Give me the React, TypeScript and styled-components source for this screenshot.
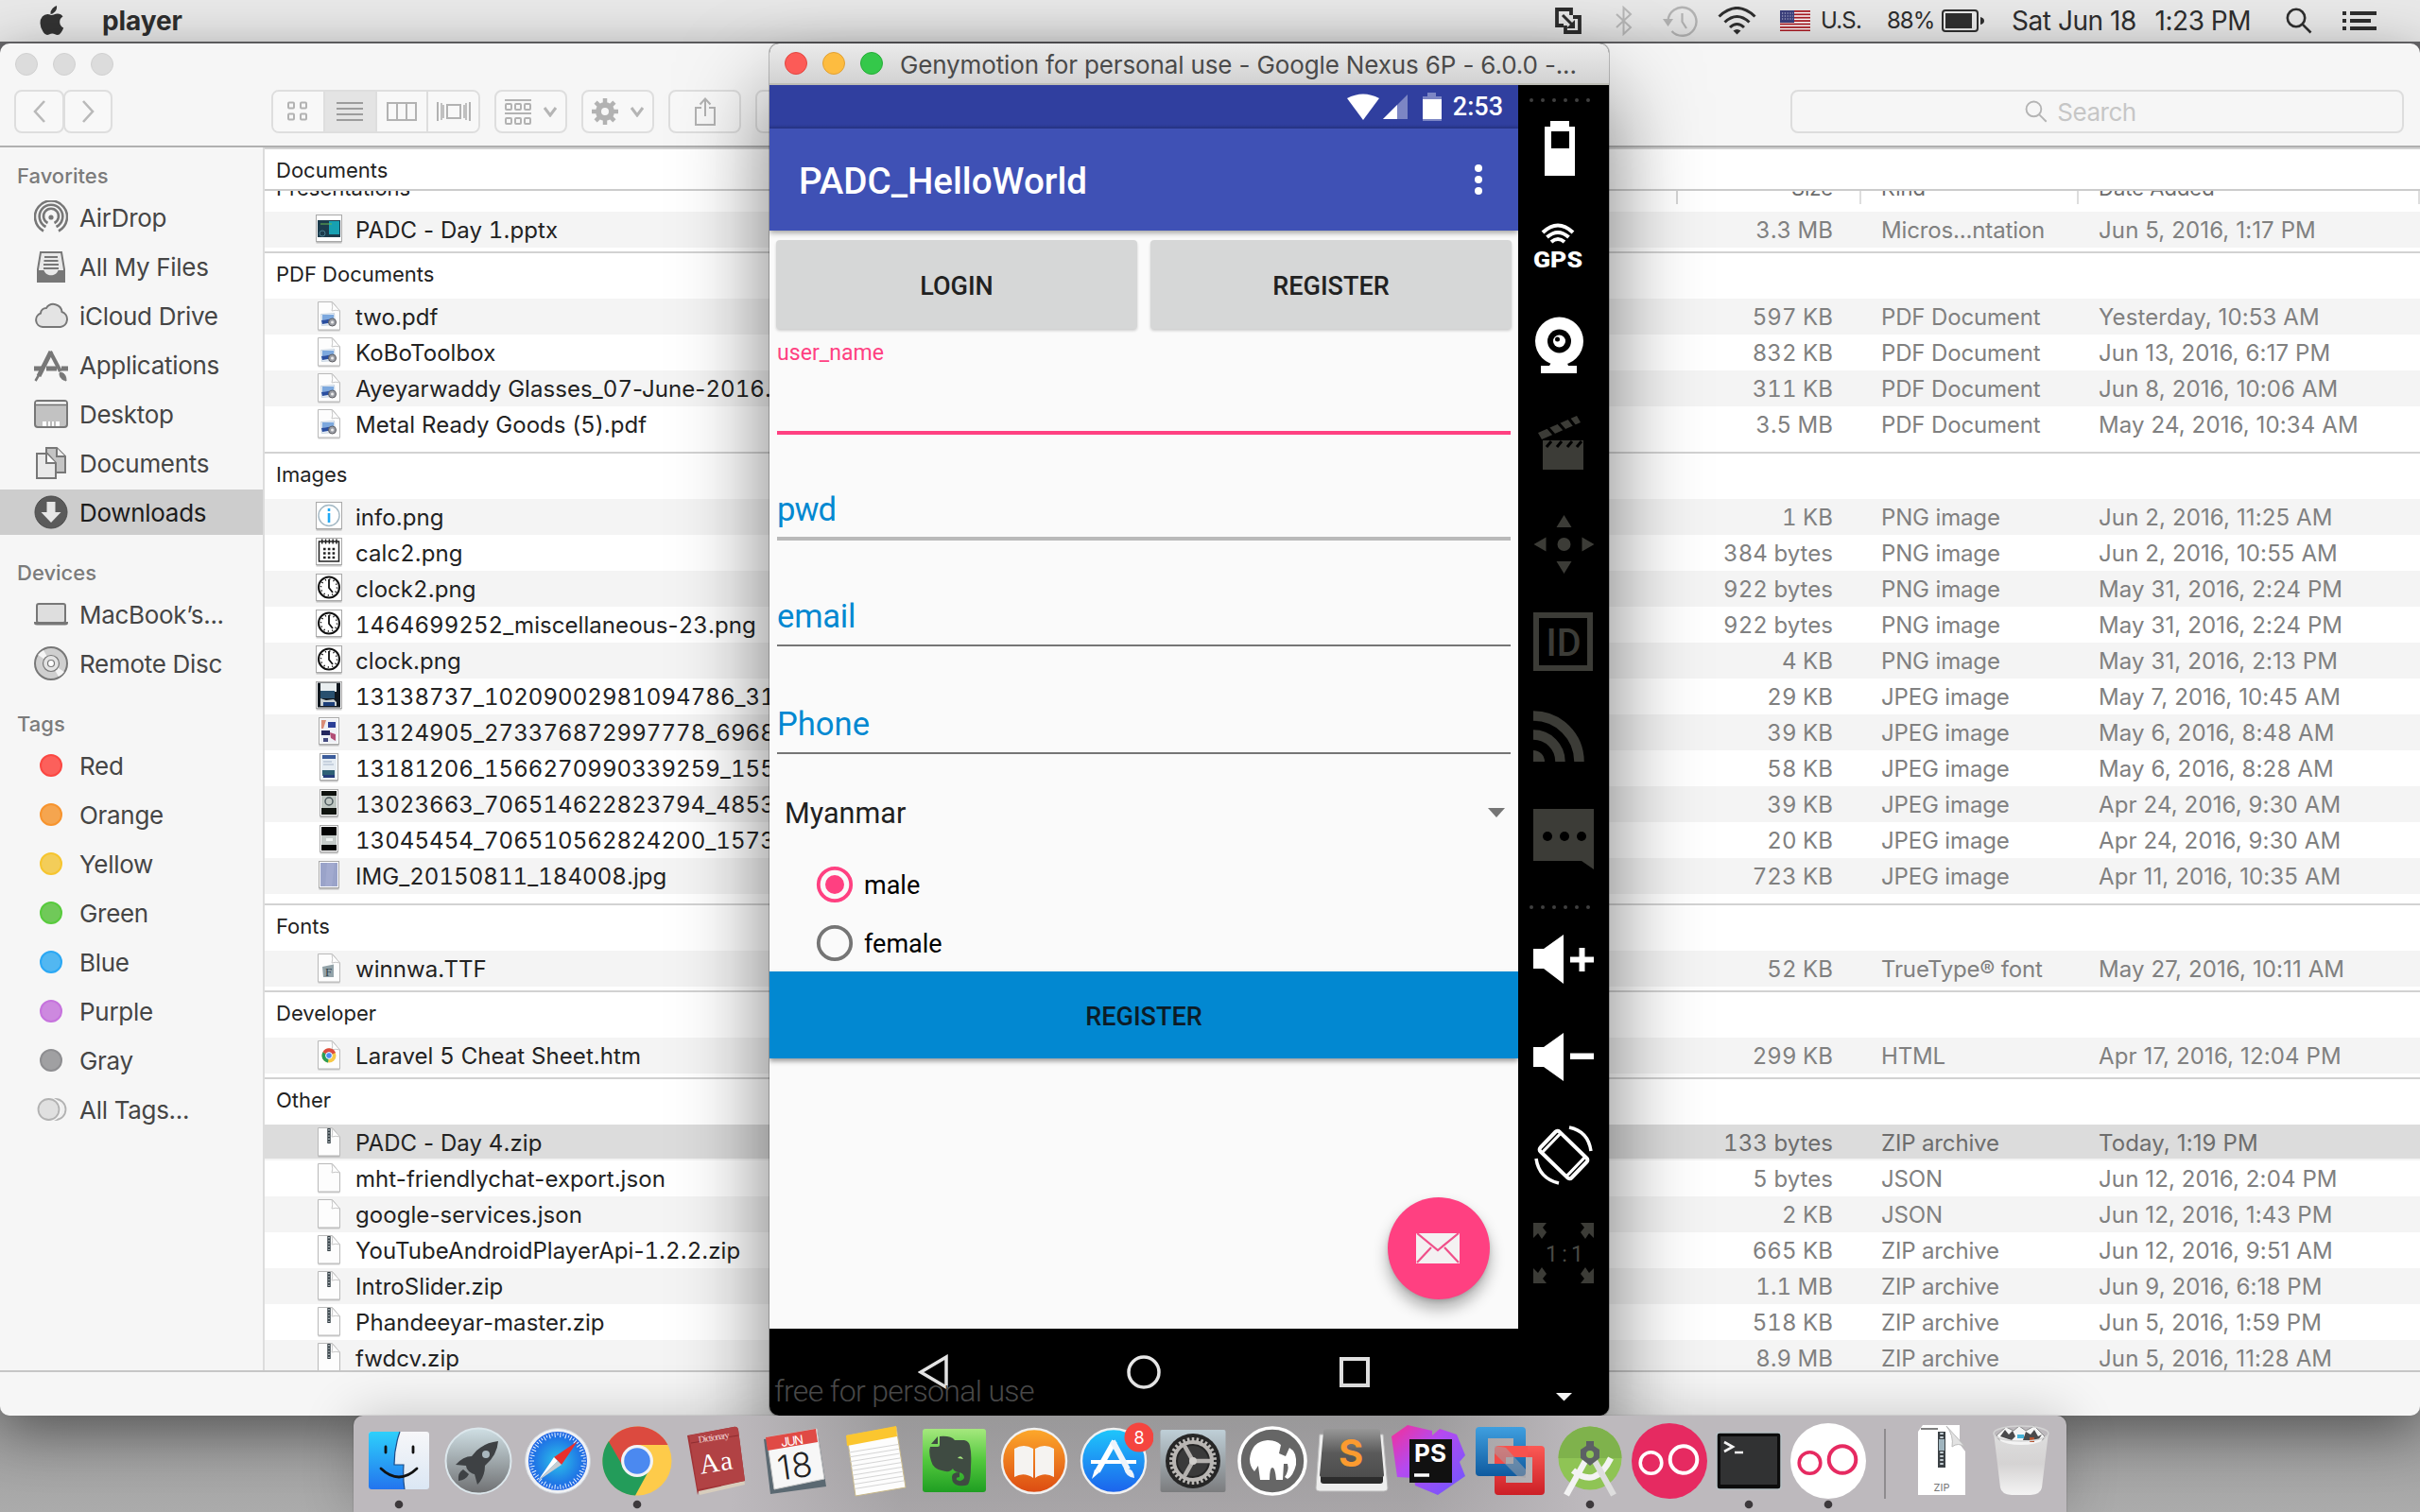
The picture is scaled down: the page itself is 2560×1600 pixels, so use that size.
import React from "react";
import styled, { createGlobalStyle, css } from "styled-components";

const ui = `Inter, "Liberation Sans", sans-serif`;
const droid = `Roboto, "Liberation Sans", sans-serif`;

const GlobalStyle = createGlobalStyle`
  *, *::before, *::after { box-sizing: border-box; }
  html, body { margin: 0; padding: 0; }
  body { width: 2560px; height: 1600px; overflow: hidden; font-family: ${ui}; }
  svg { display: block; flex: none; }
`;

/* ---------- Desktop ---------- */

const Desktop = styled.div`
  position: relative;
  display: flex;
  flex-direction: column;
  width: 2560px;
  height: 1600px;
  overflow: hidden;
  background: linear-gradient(#69686b 0, #69686b 60px, #959595 1450px, #ababab 1600px);
`;

/* ---------- Menu bar ---------- */

const MenuBar = styled.header`
  display: flex;
  align-items: center;
  justify-content: space-between;
  height: 44px;
  margin-bottom: 2px;
  padding: 0 46px 0 39px;
  background: #e8e8e8;
  color: #2e2e2e;
`;

const MenuLeft = styled.div`
  display: flex;
  align-items: center;
  gap: 39px;
`;

const AppName = styled.span`
  font-size: 28px;
  font-weight: 700;
  line-height: 42px;
  letter-spacing: -0.1px;
`;

const MenuRight = styled.div`
  display: flex;
  align-items: center;
`;

const Extra = styled.div<{ $w: number; $after?: number }>`
  display: flex;
  justify-content: space-between;
  width: ${(p) => p.$w}px;
  margin-right: ${(p) => p.$after ?? 0}px;
  white-space: nowrap;
`;

const MenuText = styled.span<{ $size?: number; $track?: number }>`
  font-size: ${(p) => p.$size ?? 27}px;
  letter-spacing: ${(p) => p.$track ?? -0.3}px;
  line-height: 44px;
`;

/* ---------- Finder window ---------- */

const FinderWindow = styled.section`
  display: flex;
  flex-direction: column;
  height: 1452px;
  border-radius: 10px;
  overflow: hidden;
  background: #f6f6f6;
`;

const FinderShadow = styled.div`
  flex: none;
  border-radius: 10px;
  box-shadow: 0 16px 60px rgba(0, 0, 0, 0.45);
`;

const Titlebar = styled.div`
  display: flex;
  align-items: center;
  gap: 16px;
  height: 44px;
  padding-left: 16px;
`;

const Light = styled.i<{ $fill: string; $ring: string }>`
  width: 24px;
  height: 24px;
  border-radius: 50%;
  background: ${(p) => p.$fill};
  border: 1px solid ${(p) => p.$ring};
`;

const Toolbar = styled.div`
  display: flex;
  align-items: flex-start;
  height: 66px;
  padding: 5px 17px 0 15px;
  border-bottom: 2px solid #b0b0b0;
`;

const ToolButton = styled.div<{ $w: number; $after?: number }>`
  display: flex;
  align-items: center;
  justify-content: center;
  gap: 12px;
  flex: none;
  width: ${(p) => p.$w}px;
  height: 46px;
  margin-right: ${(p) => p.$after ?? 0}px;
  border: 2px solid #dedede;
  border-radius: 8px;
  background: #f8f8f8;
`;

const Segments = styled.div`
  display: flex;
  flex: none;
  width: 221px;
  height: 46px;
  margin-right: 15px;
  border: 2px solid #dedede;
  border-radius: 8px;
  overflow: hidden;
`;

const Segment = styled.div<{ $on?: boolean }>`
  display: flex;
  align-items: center;
  justify-content: center;
  flex: 1;
  background: ${(p) => (p.$on ? "#e4e4e4" : "#f8f8f8")};
  & + & { border-left: 2px solid #dedede; }
`;

const SearchBox = styled.div`
  display: flex;
  align-items: center;
  justify-content: center;
  gap: 10px;
  width: 649px;
  height: 46px;
  margin-left: auto;
  padding-right: 35px;
  border: 2px solid #dddddd;
  border-radius: 8px;
  color: #c6c6c6;
  font-size: 26px;
  letter-spacing: -0.5px;
`;

const FinderBody = styled.div`
  display: flex;
  height: 1294px;
`;

const Sidebar = styled.nav`
  width: 280px;
  border-right: 2px solid #dcdcdc;
  background: #f6f6f6;
`;

const SideHeading = styled.h3<{ $first?: boolean }>`
  display: flex;
  align-items: flex-end;
  height: ${(p) => (p.$first ? 50 : 56)}px;
  margin: 0;
  padding: 0 0 0 18px;
  font-size: 22px;
  font-weight: 500;
  line-height: 40px;
  letter-spacing: 0;
  color: #7b7b7b;
`;

const SideItem = styled.div<{ $on?: boolean }>`
  display: flex;
  align-items: center;
  gap: 12px;
  height: 48px;
  margin-bottom: 4px;
  padding-left: 36px;
  font-size: 26px;
  letter-spacing: -0.3px;
  color: ${(p) => (p.$on ? "#1c1c1c" : "#454545")};
  background: ${(p) => (p.$on ? "#cdcdcd" : "transparent")};
`;

const SideLabel = styled.span`
  padding-top: 2px;
  line-height: 40px;
`;

const FileList = styled.div`
  flex: 1;
  height: 1294px;
  overflow: hidden;
  border-top: 2px solid #d2d2d2;
  background: #fff;
`;

const StickyTitle = styled.h4`
  height: 44px;
  margin: 0;
  padding-left: 12px;
  border-bottom: 2px solid #cccccc;
  font-size: 22px;
  font-weight: 400;
  line-height: 44px;
  color: #222;
`;

const grid = css`
  display: grid;
  grid-template-columns: 1493px 194px 230px 1fr;
`;

const ColumnHeads = styled.div`
  display: grid;
  grid-template-columns: 1495px 194px 230px 1fr;
  height: 22px;
  overflow: hidden;
`;

const Head = styled.div<{ $title?: boolean }>`
  height: 14px;
  padding: 0 21px;
  overflow: hidden;
  border-right: 2px solid #dddddd;
  ${(p) => p.$title && "padding-left: 12px; border-right-color: #d4d4d4;"}
  &:nth-child(2) { text-align: right; padding-right: 28px; }
  span {
    display: block;
    height: 14px;
    margin-top: -23px;
    font-size: 22px;
    line-height: 40px;
    color: ${(p) => (p.$title ? "#222" : "#6c6c6c")};
  }
`;

const Group = styled.section<{ $gap: number }>`
  padding-bottom: ${(p) => p.$gap}px;
`;

const GroupTitle = styled.h4`
  height: 50px;
  margin: 0;
  padding-left: 12px;
  border-top: 2px solid #d2d2d2;
  font-size: 22px;
  font-weight: 400;
  line-height: 44px;
  color: #222;
`;

const Row = styled.div<{ $on?: boolean; $stripe: boolean }>`
  ${grid}
  height: 38px;
  font-size: 24px;
  line-height: 40px;
  white-space: nowrap;
  color: ${(p) => (p.$on ? "#6d6d6d" : "#808080")};
  background: ${(p) =>
    p.$on ? "linear-gradient(#dcdcdc 36px, #f4f4f4 36px)" : p.$stripe ? "#f4f4f4" : "#fff"};
`;

const NameCell = styled.div`
  display: flex;
  align-items: center;
  gap: 14px;
  height: 38px;
  padding-left: 54px;
`;

const FileName = styled.span`
  padding-top: 2px;
  line-height: 36px;
  letter-spacing: 0.06px;
  color: #222;
`;

const Digits = styled.span`
  font-variant-numeric: tabular-nums;
`;

const Cell = styled.div<{ $right?: boolean; $track?: number }>`
  height: 38px;
  padding: 0 ${(p) => (p.$right ? 28 : 0)}px 0 23px;
  text-align: ${(p) => (p.$right ? "right" : "left")};
  font-variant-numeric: ${(p) => (p.$right ? "tabular-nums" : "normal")};
  letter-spacing: ${(p) => p.$track ?? -0.15}px;
`;

const StatusFooter = styled.div`
  height: 48px;
  border-top: 2px solid #c6c6c6;
`;

/* ---------- Emulator window ---------- */

const Emulator = styled.section`
  position: absolute;
  left: 814px;
  top: 46px;
  display: flex;
  flex-direction: column;
  width: 888px;
  height: 1452px;
  border-radius: 10px;
  background: #000;
  overflow: hidden;
`;

const EmulatorShadow = styled.div`
  position: absolute;
  left: 814px;
  top: 46px;
  width: 888px;
  height: 1452px;
  border-radius: 10px;
  box-shadow: 0 0 0 1px rgba(0, 0, 0, 0.22), 0 50px 95px rgba(0, 0, 0, 0.52);
`;

const EmuTitle = styled.div`
  display: flex;
  align-items: center;
  gap: 16px;
  height: 44px;
  padding-left: 16px;
  border-bottom: 2px solid #bdbdb6;
  background: linear-gradient(#ebebeb, #d2d2d2);
  font-size: 26px;
  color: #4a4a4a;
  span {
    margin-left: 2px;
    padding-top: 2px;
    letter-spacing: -0.14px;
    white-space: nowrap;
  }
`;

const EmuBody = styled.div`
  display: flex;
  height: 1408px;
`;

const Screen = styled.div`
  display: flex;
  flex-direction: column;
  width: 792px;
  background: #fafafa;
  font-family: ${droid};
`;

const StatusBar = styled.div`
  display: flex;
  align-items: center;
  justify-content: flex-end;
  height: 46px;
  padding-right: 16px;
  background: linear-gradient(#303f9f 42px, #29378c 46px);
  color: #fff;
  font-size: 27px;
  font-weight: 500;
  line-height: 50px;
`;

const AppBar = styled.div`
  display: flex;
  align-items: center;
  justify-content: space-between;
  flex: none;
  height: 108px;
  padding: 0 38px 0 31px;
  background: #3f51b5;
  box-shadow: 0 2px 6px rgba(0, 0, 0, 0.4);
  color: #fff;
  font-size: 38.6px;
  font-weight: 500;
`;

const AppTitle = styled.span`
  padding-top: 3px;
`;

const ButtonRow = styled.div`
  display: flex;
  gap: 14px;
  height: 106px;
  padding: 10px 7px 0;
`;

const RaisedButton = styled.div`
  display: flex;
  align-items: center;
  justify-content: center;
  flex: 1;
  height: 94px;
  padding-top: 4px;
  border-radius: 4px;
  background: #d6d7d7;
  box-shadow: 0 2px 3px rgba(0, 0, 0, 0.18);
  font-size: 27px;
  font-weight: 500;
  color: #212121;
`;

const Field = styled.div<{ $h: number; $line: string; $weight: number; $pad: number; $track?: number }>`
  display: flex;
  align-items: flex-end;
  flex: none;
  height: ${(p) => p.$h}px;
  margin: 0 8px;
  padding-bottom: ${(p) => p.$pad}px;
  border-bottom: ${(p) => p.$weight}px solid ${(p) => p.$line};
  font-size: 34.6px;
  line-height: 40px;
  letter-spacing: ${(p) => p.$track ?? 0}px;
  color: #0288d1;
`;

const FocusedField = styled(Field)`
  align-items: flex-start;
  padding-top: 4px;
  font-size: 23.1px;
  color: #ff4081;
`;

const Spinner = styled.div`
  display: flex;
  align-items: center;
  justify-content: space-between;
  flex: none;
  height: 107px;
  padding: 16px 14px 0 16px;
  font-size: 30.6px;
  line-height: 36px;
  color: #212121;
  span { padding-top: 2px; }
`;

const RadioRow = styled.div`
  display: flex;
  align-items: center;
  gap: 11px;
  flex: none;
  height: 62px;
  padding-left: 49px;
  font-size: 27px;
  color: #000;
  span { padding-top: 2px; }
`;

const BlueButton = styled.div`
  display: flex;
  align-items: center;
  justify-content: center;
  flex: none;
  height: 92px;
  margin-top: -1px;
  padding-top: 3px;
  background: #0288d1;
  box-shadow: 0 3px 5px rgba(0, 0, 0, 0.38);
  font-size: 27px;
  font-weight: 500;
  color: #0c1c27;
`;

const FabArea = styled.div`
  display: flex;
  align-items: flex-end;
  justify-content: flex-end;
  flex: 1;
  padding: 0 30px 31px 0;
`;

const Fab = styled.div`
  display: flex;
  align-items: center;
  justify-content: center;
  width: 108px;
  height: 108px;
  padding-right: 2px;
  border-radius: 50%;
  background: #ff4081;
  box-shadow: 0 10px 16px rgba(0, 0, 0, 0.3), 0 2px 4px rgba(0, 0, 0, 0.12);
`;

const NavBar = styled.div`
  position: relative;
  display: flex;
  align-items: center;
  justify-content: center;
  gap: 189px;
  flex: none;
  height: 92px;
  padding-right: 1px;
  background: #000;
`;

const Watermark = styled.span`
  position: absolute;
  left: 5px;
  top: 45px;
  font-size: 32px;
  font-weight: 300;
  line-height: 42px;
  letter-spacing: -0.65px;
  color: #4c4c4c;
`;

const Strip = styled.aside`
  display: flex;
  flex-direction: column;
  align-items: center;
  width: 96px;
  padding-top: 14px;
  background: #000;
`;

const Grip = styled.div<{ $top?: number }>`
  display: flex;
  gap: 8px;
  flex: none;
  width: 64px;
  height: 4px;
  margin: ${(p) => p.$top ?? 0}px 8px 0 0;
  i {
    width: 4px;
    height: 4px;
    border-radius: 50%;
    background: #3f3f3f;
  }
`;

/* ---------- Dock ---------- */

const DockArea = styled.footer`
  position: relative;
  display: flex;
  justify-content: center;
  width: 2560px;
  height: 102px;
`;

const DockShelf = styled.div`
  display: flex;
  width: 1812px;
  height: 102px;
  padding: 0 6px;
  border-radius: 10px 10px 0 0;
  background:
    linear-gradient(90deg, rgba(189, 185, 189, 1) 22%, rgba(150, 149, 151, 0.35) 32%, rgba(150, 149, 151, 0.35) 62%, rgba(189, 185, 189, 1) 72%),
    linear-gradient(#9b9a9b, #b2aeb1);
  box-shadow: 0 0 56px rgba(0, 0, 0, 0.2), 0 0 2px rgba(0, 0, 0, 0.25);
`;

const DockRule = styled.div`
  display: flex;
  justify-content: center;
  width: 36px;
  padding-top: 14px;
  &::before {
    content: "";
    width: 2px;
    height: 74px;
    background: #8f8c8f;
  }
`;

/* ---------- Small icon helpers ---------- */

type Kids = { children?: React.ReactNode };
const Svg = ({ w, h, box, children }: { w: number; h: number; box?: string } & Kids) => (
  <svg width={w} height={h} viewBox={box ?? `0 0 ${w} ${h}`} fill="none">
    {children}
  </svg>
);

const Chevron = () => (
  <Svg w={16} h={12}>
    <path d="M2 2l6 8 6-8" stroke="#b5b5b5" strokeWidth="3" />
  </Svg>
);

const Magnifier = ({ s, c, t }: { s: number; c: string; t: number }) => (
  <svg width={s} height={s} viewBox="0 0 28 28" fill="none" stroke={c} strokeWidth={t}>
    <circle cx="11" cy="11" r="9.2" />
    <path d="M17.6 17.6L26.5 26.5" />
  </svg>
);

const gearTeeth = (n: number, r0: number, r1: number, w: number, fill: string) =>
  Array.from({ length: n }, (_, i) => (
    <rect key={i} x={-w / 2} y={-r1} width={w} height={r1 - r0} fill={fill} transform={`rotate(${(360 / n) * i})`} />
  ));

/* ---------- Sidebar icons ---------- */

const g = "#777";
const sideIcons: Record<string, React.ReactNode> = {
  airdrop: (
    <g stroke={g} strokeWidth="2.6">
      <path d="M10 32.5A17 17 0 1 1 26 32.5" />
      <path d="M12.5 28A12.3 12.3 0 1 1 23.5 28" />
      <path d="M14.5 24A8 8 0 1 1 21.5 24" />
      <circle cx="18" cy="18" r="2.6" fill={g} stroke="none" />
    </g>
  ),
  allfiles: (
    <g>
      <path d="M7 3h22l3 18v13H4V21z" fill="#e9e9e9" stroke={g} strokeWidth="2" />
      <path d="M3.500 22h7c2 7 13 7 15 0h7v12h-29z" fill={g} />
      <path d="M11 8h14M10.500 12h15M10 16h16M10 20h16" stroke={g} strokeWidth="2" />
    </g>
  ),
  cloud: (
    <path
      d="M9 30a7.500 7.500 0 0 1-2-14.500 6 6 0 0 1 6-5.500A9 9 0 0 1 29.500 14 8.300 8.300 0 0 1 28 30z"
      fill="#e4e4e4"
      stroke={g}
      strokeWidth="2"
    />
  ),
  apps: (
    <g stroke={g}>
      <path d="M0 22h8M13 22h11M29 22h7" strokeWidth="5" />
      <path d="M18 4L5 30" strokeWidth="5" />
      <path d="M5 29l-3.500 6" strokeWidth="2.500" />
      <path d="M17 4l11 21" strokeWidth="4" />
      <path d="M28 26c5 1 6 5 6 9-4-1-7-3-7-8z" fill={g} />
    </g>
  ),
  desktop: (
    <g>
      <rect x="1" y="4" width="34" height="28" rx="3" fill="#c2c2c2" stroke={g} strokeWidth="2" />
      <path d="M2 6.500h32" stroke="#fff" strokeWidth="2" />
      <path d="M2 8.500h32" stroke={g} strokeWidth="1.500" />
      <path d="M9 26h18v5H9z" fill="#fff" />
      <path d="M14 26v5M18 26v5M22 26v5" stroke={g} />
    </g>
  ),
  docs: (
    <g stroke={g} strokeWidth="2">
      <path d="M13 2h11l9 9v17H13z" fill="#c4c4c4" />
      <path d="M24 2v9h9" fill="#eee" />
      <path d="M3 8h11l9 10v16H3z" fill="#e9e9e9" />
      <path d="M13 8v10h10" fill="#fff" />
    </g>
  ),
  down: (
    <g>
      <circle cx="18" cy="18" r="17" fill="#5a5a5a" stroke="#4b4b4b" />
      <path d="M13.500 7h9v11h6L18 29 7.500 18h6z" fill="#e6e6e6" />
    </g>
  ),
  laptop: (
    <g>
      <rect x="3" y="7" width="30" height="20" rx="2" fill="#dedede" stroke={g} strokeWidth="2" />
      <path d="M0 26h36v1q0 2.500-3 2.500H3q-3 0-3-2.500z" fill={g} />
    </g>
  ),
  disc: (
    <g stroke={g}>
      <circle cx="18" cy="18" r="17" fill="#cfcfcf" strokeWidth="2" />
      <path d="M18 18L4 9a17 17 0 0 1 6-5zM18 18l14 9a17 17 0 0 1-6 5z" fill="#f5f5f5" stroke="none" />
      <circle cx="18" cy="18" r="8.500" fill="#e3e3e3" strokeWidth="1.200" />
      <circle cx="18" cy="18" r="3.500" fill="#fff" strokeWidth="1.200" />
    </g>
  ),
  alltags: (
    <g stroke="#b2b2b2" strokeWidth="1.800">
      <circle cx="22.500" cy="18" r="11" fill="#efefef" />
      <circle cx="16" cy="18" r="13" fill="#f6f6f6" stroke="none" />
      <circle cx="15.500" cy="18" r="11" fill="#e0e0e0" />
    </g>
  ),
};

const Tag = ({ c, r }: { c: string; r: string }) => (
  <Svg w={36} h={36}>
    <circle cx="18" cy="18" r="11" fill={c} stroke={r} strokeWidth="2" />
  </Svg>
);

const SideIcon = ({ name }: { name: string }) => (
  <Svg w={36} h={36}>{sideIcons[name]}</Svg>
);

const favorites = [
  ["airdrop", "AirDrop"],
  ["allfiles", "All My Files"],
  ["cloud", "iCloud Drive"],
  ["apps", "Applications"],
  ["desktop", "Desktop"],
  ["docs", "Documents"],
  ["down", "Downloads"],
];

const tags = [
  ["Red", "#fc605b", "#fb4843"],
  ["Orange", "#f5a54f", "#f7942e"],
  ["Yellow", "#f3cd59", "#f6c52f"],
  ["Green", "#70c959", "#58cb3d"],
  ["Blue", "#52b7f1", "#2ba8f4"],
  ["Purple", "#cd89df", "#c673dd"],
  ["Gray", "#a0a0a2", "#8e8e91"],
];

/* ---------- File icons ---------- */

const Page = ({ children }: Kids) => (
  <g>
    <path d="M2.500 2h15l8 9.500v20h-23z" fill="#000" opacity=".18" transform="translate(0 1)" />
    <path d="M2.500 1.500h15l8 9.500v20h-23z" fill="#fdfdfd" stroke="#b9b9b9" />
    <path d="M17 1.500q1.500 6 0 9.500 4-1.500 8.500 0z" fill="#fff" stroke="#c8c8c8" />
    {children}
  </g>
);

const Thumb = ({ x = 0, children }: { x?: number } & Kids) => (
  <g>
    <rect x={x + 0.5} y="2.500" width={27 - x * 2} height="29" fill="#000" opacity=".22" />
    <rect x={x + 0.5} y="1.500" width={27 - x * 2} height="28" fill="#fff" stroke="#a9a9a9" />
    {children}
  </g>
);

const Clock = () => (
  <Thumb>
    <circle cx="14" cy="15.500" r="11" stroke="#111" strokeWidth="2" />
    <path d="M14 7v9l4 5" stroke="#111" strokeWidth="1.800" />
    <circle cx="14" cy="15.500" r="8.500" stroke="#111" strokeWidth="1.600" strokeDasharray="1.200 3.250" />
  </Thumb>
);

const fileIcons: Record<string, React.ReactNode> = {
  pptx: (
    <Thumb>
      <rect x="2" y="7" width="24" height="18" fill="#1c3b4c" />
      <rect x="14" y="8" width="11" height="14" fill="#17a0b2" />
      <path d="M5 11h12" stroke="#69b84f" />
      <circle cx="7" cy="21" r="3" stroke="#4a7d90" />
    </Thumb>
  ),
  pdf: (
    <Page>
      <rect x="6" y="14" width="14" height="12" fill="#e9f0f8" stroke="#a9bcd0" strokeWidth=".6" transform="rotate(-4 13 20)" />
      <path d="M7 15h12v4l-12 2z" fill="#7ca8de" />
      <path d="M6 21l13-2v4l-12 2z" fill="#2a4fa0" />
      <circle cx="17.500" cy="23" r="4" fill="#9c9fa6" stroke="#5d5d62" />
      <circle cx="17.500" cy="23" r="1.500" fill="#ececec" />
    </Page>
  ),
  info: (
    <Thumb>
      <circle cx="14" cy="15.500" r="11" stroke="#a3b8c4" strokeWidth="1.400" />
      <path d="M14 13v10M14 8v3" stroke="#21a9f5" strokeWidth="2.600" />
    </Thumb>
  ),
  calc: (
    <Thumb>
      <rect x="3.500" y="5" width="21" height="21" stroke="#222" strokeWidth="1.500" />
      <path d="M6 5h17" stroke="#222" strokeWidth="5" strokeDasharray="1.500 2.300" />
      <path d="M8 13h13M8 17.500h13M8 22h13" stroke="#222" strokeWidth="2.600" strokeDasharray="2.600 2.200" />
    </Thumb>
  ),
  clock: <Clock />,
  j1: (
    <Thumb>
      <rect x="2" y="2.500" width="24" height="26" fill="#111820" />
      <rect x="5" y="3" width="17" height="9" fill="#e9eef0" />
      <rect x="5" y="11" width="15" height="8" fill="#29506f" />
      <path d="M5 19l6 2 8-1 3 3v4H5z" fill="#c9d1d3" />
      <rect x="8" y="23" width="12" height="4" fill="#1c3f7a" />
    </Thumb>
  ),
  j2: (
    <Thumb x={3}>
      <rect x="5" y="3" width="18" height="25" fill="#eef0f5" />
      <path d="M6 4h5l-3 9H6z" fill="#d98d77" />
      <path d="M13 6h8v6h-8z" fill="#2b3f97" />
      <path d="M6 15h9v5H6z" fill="#23275e" />
      <path d="M15 17l6 2v7l-5-3z" fill="#b24d75" />
      <path d="M8 23h5v4H8z" fill="#454b80" />
    </Thumb>
  ),
  j3: (
    <Thumb x={4}>
      <rect x="6" y="3" width="16" height="25" fill="#e6edf3" />
      <rect x="7" y="3" width="14" height="4" fill="#3c5c9b" />
      <path d="M8 10h9M8 13h11" stroke="#a6b4c8" />
      <rect x="7" y="19" width="13" height="6" fill="#2f6176" />
      <rect x="8" y="24" width="12" height="3" fill="#253d7b" />
    </Thumb>
  ),
  j4: (
    <Thumb x={4}>
      <rect x="6" y="3" width="16" height="25" fill="#10140f" />
      <rect x="6" y="8" width="16" height="13" fill="#bfc7c2" />
      <circle cx="14" cy="14" r="4" stroke="#4e5b5e" strokeWidth="1.500" />
    </Thumb>
  ),
  j5: (
    <Thumb x={4}>
      <rect x="6" y="3" width="16" height="25" fill="#040404" />
      <rect x="6" y="12" width="16" height="10" fill="#c5cbc9" />
      <path d="M11 15h7v3h-7z" fill="#eef2f1" />
    </Thumb>
  ),
  j6: (
    <Thumb x={3}>
      <rect x="5" y="3" width="18" height="25" fill="#9aa3c9" />
      <path d="M12 3h8l-3 25h-7z" fill="#a2aacf" />
    </Thumb>
  ),
  ttf: (
    <Page>
      <path d="M7 15l12-2.500V26H8z" fill="#93a3a9" />
      <text x="10" y="25" fontFamily="Liberation Serif, serif" fontSize="13" fill="#35444a">F</text>
    </Page>
  ),
  htm: (
    <Page>
      <circle cx="14" cy="17" r="7.500" fill="#f7c948" />
      <path d="M14 17L7.500 13.200A7.500 7.500 0 0 0 13 24.400z" fill="#2a9d57" />
      <path d="M14 17L7.500 13.200A7.500 7.500 0 0 1 21 14z" fill="#dc4c40" />
      <circle cx="14" cy="17" r="3.400" fill="#4c8bf5" stroke="#fff" strokeWidth="1" />
    </Page>
  ),
  zip: (
    <Page>
      <path d="M14 2v16" stroke="#2f3a40" strokeWidth="3.400" />
      <path d="M14 3v14" stroke="#cfd6da" strokeWidth="1.400" strokeDasharray="1.400 1.800" />
    </Page>
  ),
  json: <Page />,
};

type FileRow = [icon: string, name: string, size: string, kind: string, date: string, on?: boolean];

const firstFile: FileRow = ["pptx", "PADC - Day 1.pptx", "3.3 MB", "Micros...ntation", "Jun 5, 2016, 1:17 PM"];

const groups: { title: string; gap: number; files: FileRow[] }[] = [
  {
    title: "PDF Documents",
    gap: 10,
    files: [
      ["pdf", "two.pdf", "597 KB", "PDF Document", "Yesterday, 10:53 AM"],
      ["pdf", "KoBoToolbox", "832 KB", "PDF Document", "Jun 13, 2016, 6:17 PM"],
      ["pdf", "Ayeyarwaddy Glasses_07-June-2016.pdf", "311 KB", "PDF Document", "Jun 8, 2016, 10:06 AM"],
      ["pdf", "Metal Ready Goods (5).pdf", "3.5 MB", "PDF Document", "May 24, 2016, 10:34 AM"],
    ],
  },
  {
    title: "Images",
    gap: 10,
    files: [
      ["info", "info.png", "1 KB", "PNG image", "Jun 2, 2016, 11:25 AM"],
      ["calc", "calc2.png", "384 bytes", "PNG image", "Jun 2, 2016, 10:55 AM"],
      ["clock", "clock2.png", "922 bytes", "PNG image", "May 31, 2016, 2:24 PM"],
      ["clock", "1464699252_miscellaneous-23.png", "922 bytes", "PNG image", "May 31, 2016, 2:24 PM"],
      ["clock", "clock.png", "4 KB", "PNG image", "May 31, 2016, 2:13 PM"],
      ["j1", "13138737_10209002981094786_31", "29 KB", "JPEG image", "May 7, 2016, 10:45 AM"],
      ["j2", "13124905_273376872997778_6968", "39 KB", "JPEG image", "May 6, 2016, 8:48 AM"],
      ["j3", "13181206_1566270990339259_155", "58 KB", "JPEG image", "May 6, 2016, 8:28 AM"],
      ["j4", "13023663_706514622823794_4853", "39 KB", "JPEG image", "Apr 24, 2016, 9:30 AM"],
      ["j5", "13045454_706510562824200_1573", "20 KB", "JPEG image", "Apr 24, 2016, 9:30 AM"],
      ["j6", "IMG_20150811_184008.jpg", "723 KB", "JPEG image", "Apr 11, 2016, 10:35 AM"],
    ],
  },
  {
    title: "Fonts",
    gap: 4,
    files: [["ttf", "winnwa.TTF", "52 KB", "TrueType® font", "May 27, 2016, 10:11 AM"]],
  },
  {
    title: "Developer",
    gap: 4,
    files: [["htm", "Laravel 5 Cheat Sheet.htm", "299 KB", "HTML", "Apr 17, 2016, 12:04 PM"]],
  },
  {
    title: "Other",
    gap: 0,
    files: [
      ["zip", "PADC - Day 4.zip", "133 bytes", "ZIP archive", "Today, 1:19 PM", true],
      ["json", "mht-friendlychat-export.json", "5 bytes", "JSON", "Jun 12, 2016, 2:04 PM"],
      ["json", "google-services.json", "2 KB", "JSON", "Jun 12, 2016, 1:43 PM"],
      ["zip", "YouTubeAndroidPlayerApi-1.2.2.zip", "665 KB", "ZIP archive", "Jun 12, 2016, 9:51 AM"],
      ["zip", "IntroSlider.zip", "1.1 MB", "ZIP archive", "Jun 9, 2016, 6:18 PM"],
      ["zip", "Phandeeyar-master.zip", "518 KB", "ZIP archive", "Jun 5, 2016, 1:59 PM"],
      ["zip", "fwdcv.zip", "8.9 MB", "ZIP archive", "Jun 5, 2016, 11:28 AM"],
    ],
  },
];

const File = ({ file, index }: { file: FileRow; index: number }) => {
  const [icon, name, size, kind, date, on] = file;
  return (
    <Row $on={on} $stripe={index % 2 === 0}>
      <NameCell>
        <Svg w={28} h={34}>{fileIcons[icon]}</Svg>
        <FileName>
          {name.split(/(\d+)/).map((part, i) => (i % 2 ? <Digits key={i}>{part}</Digits> : part))}
        </FileName>
      </NameCell>
      <Cell $right $track={0.05}>{size}</Cell>
      <Cell>{kind}</Cell>
      <Cell $track={0.12}>{date}</Cell>
    </Row>
  );
};

const Finder = () => (
  <FinderShadow>
    <FinderWindow>
      <Titlebar>
        {[0, 1, 2].map((i) => (
          <Light key={i} $fill="#dcdcdc" $ring="#d0d0d0" />
        ))}
      </Titlebar>
      <Toolbar>
        <ToolButton $w={53} $after={-1}>
          <Svg w={16} h={26}>
            <path d="M13 2L3 13l10 11" stroke="#b9b9b9" strokeWidth="2.600" />
          </Svg>
        </ToolButton>
        <ToolButton $w={52} $after={168}>
          <Svg w={16} h={26}>
            <path d="M3 2l10 11L3 24" stroke="#b9b9b9" strokeWidth="2.600" />
          </Svg>
        </ToolButton>
        <Segments>
          <Segment>
            <Svg w={22} h={22}>
              {[0, 13].map((x) =>
                [1, 13].map((y) => (
                  <rect key={`${x}-${y}`} x={x + 1} y={y + 0.5} width="6" height="6" rx="1" stroke="#b2b2b2" strokeWidth="2" />
                ))
              )}
            </Svg>
          </Segment>
          <Segment $on>
            <Svg w={28} h={22}>
              <path d="M0 2h28M0 8h28M0 14h28M0 20h28" stroke="#9c9c9c" strokeWidth="2" />
            </Svg>
          </Segment>
          <Segment>
            <Svg w={32} h={22}>
              <path d="M1 2h30v18H1zM11 2v18M21 2v18" stroke="#b2b2b2" strokeWidth="2" />
            </Svg>
          </Segment>
          <Segment>
            <Svg w={36} h={22}>
              <path d="M11 4h14v14H11zM1 1v20M35 1v20" stroke="#b2b2b2" strokeWidth="2" />
              <path d="M5 2v18M7 4v14M31 2v18M29 4v14" stroke="#b2b2b2" strokeWidth="1.600" />
            </Svg>
          </Segment>
        </Segments>
        <ToolButton $w={77} $after={15}>
          <Svg w={28} h={28}>
            <path d="M0 2h28M0 16h28" stroke="#b2b2b2" strokeWidth="2" />
            {[1, 11, 21].map((x) =>
              [6, 21].map((y) => (
                <rect key={`${x}-${y}`} x={x} y={y} width="6" height="6" rx="1" stroke="#b2b2b2" strokeWidth="2" />
              ))
            )}
          </Svg>
          <Chevron />
        </ToolButton>
        <ToolButton $w={77} $after={15}>
          <Svg w={28} h={28} box="-14 -14 28 28">
            <circle r="7" stroke="#b2b2b2" strokeWidth="6" />
            {gearTeeth(8, 8, 14, 4.5, "#b2b2b2")}
          </Svg>
          <Chevron />
        </ToolButton>
        <ToolButton $w={77} $after={15}>
          <Svg w={24} h={32}>
            <path d="M8 12H2v18h20V12h-6M12 21V3M6.500 8.500L12 2.500l5.500 6" stroke="#b2b2b2" strokeWidth="2" />
          </Svg>
        </ToolButton>
        <ToolButton $w={77} />
        <SearchBox>
          <Magnifier s={24} c="#b4b4b4" t={2.2} />
          Search
        </SearchBox>
      </Toolbar>
      <FinderBody>
        <Sidebar>
          <SideHeading $first>Favorites</SideHeading>
          {favorites.map(([icon, label]) => (
            <SideItem key={label} $on={label === "Downloads"}>
              <SideIcon name={icon} />
              <SideLabel>{label}</SideLabel>
            </SideItem>
          ))}
          <SideHeading>Devices</SideHeading>
          <SideItem>
            <SideIcon name="laptop" />
            <SideLabel>MacBook’s...</SideLabel>
          </SideItem>
          <SideItem>
            <SideIcon name="disc" />
            <SideLabel>Remote Disc</SideLabel>
          </SideItem>
          <SideHeading>Tags</SideHeading>
          {tags.map(([label, c, r]) => (
            <SideItem key={label}>
              <Tag c={c} r={r} />
              <SideLabel>{label}</SideLabel>
            </SideItem>
          ))}
          <SideItem>
            <SideIcon name="alltags" />
            <SideLabel>All Tags...</SideLabel>
          </SideItem>
        </Sidebar>
        <FileList>
          <StickyTitle>Documents</StickyTitle>
          <ColumnHeads>
            <Head $title><span>Presentations</span></Head>
            <Head><span>Size</span></Head>
            <Head><span>Kind</span></Head>
            <Head><span>Date Added</span></Head>
          </ColumnHeads>
          <Group $gap={4}>
            <File file={firstFile} index={0} />
          </Group>
          {groups.map((grp) => (
            <Group key={grp.title} $gap={grp.gap}>
              <GroupTitle>{grp.title}</GroupTitle>
              {grp.files.map((f, i) => (
                <File key={f[1]} file={f} index={i} />
              ))}
            </Group>
          ))}
        </FileList>
      </FinderBody>
      <StatusFooter />
    </FinderWindow>
  </FinderShadow>
);

/* ---------- Emulator ---------- */

const dim = "#3c3c37";

const ScaleArrow = ({ t }: { t: string }) => (
  <path transform={t} d="M0 0h14l-4 5 4 5-5 7-4-6-5 5z" fill={dim} />
);

const topTools: React.ReactNode[] = [
  <g fill="#fff">
    <path d="M34 20h20v6h6v52H28V26h6z" />
    <path d="M35 31h19v18H35z" fill="#000" />
  </g>,
  <g>
    <g stroke="#fff" strokeWidth="4">
      <path d="M26 34q16-15 32 0" />
      <path d="M30.500 39q11.500-10 23 0" />
      <path d="M35 44q7-6 14 0" />
    </g>
    <text x="42" y="71" fontFamily={droid} fontSize="24" fontWeight="900" fill="#fff" textAnchor="middle" textLength="52" lengthAdjust="spacingAndGlyphs">
      GPS
    </text>
  </g>,
  <g>
    <circle cx="43.500" cy="45" r="25.500" fill="#fff" />
    <path d="M36 66h15l2 5h9v8H24v-8h9z" fill="#fff" />
    <circle cx="43.500" cy="45" r="12.500" fill="#000" />
    <circle cx="43.500" cy="45" r="6.500" fill="#fff" />
    <circle cx="41.500" cy="43" r="2.500" fill="#000" />
  </g>,
  <g>
    <path d="M26 46h43v31H26z" fill={dim} />
    <path d="M30 53l5-6M41 53l5-6M52 53l5-6M62 53l5-6" stroke="#000" strokeWidth="3" />
    <path d="M21 38L62 20l4 7-41 18z" fill={dim} />
    <path d="M31 32l7 8M42 27l7 8M53 22l7 9" stroke="#000" strokeWidth="3" />
  </g>,
  <g fill={dim}>
    <circle cx="48.500" cy="52" r="7" />
    <path d="M48.500 21l8 13h-16zM48.500 83l8-13h-16zM16.500 52l13-7.500v15zM80.500 52l-13-7.500v15z" />
  </g>,
  <g>
    <path d="M19 23h57v56H19z" stroke={dim} strokeWidth="6" />
    <text x="48" y="66" fontFamily={droid} fontSize="40" fontWeight="500" fill={dim} textAnchor="middle" textLength="37" lengthAdjust="spacingAndGlyphs">
      ID
    </text>
  </g>,
  <g stroke={dim} strokeWidth="10.500">
    <path d="M16 25.500a48.500 48.500 0 0 1 48.500 48.500M16 45.500A28.500 28.500 0 0 1 44.500 74" />
    <path d="M16 62a12 12 0 0 1 12 12H16z" fill={dim} stroke="none" />
  </g>,
  <g>
    <path d="M16 20h64v64L67 75H16z" fill={dim} />
    <circle cx="31" cy="49" r="5" fill="#000" />
    <circle cx="49" cy="49" r="5" fill="#000" />
    <circle cx="67" cy="49" r="5" fill="#000" />
  </g>,
];

const lowerTools: React.ReactNode[] = [
  <g fill="#fff">
    <path d="M16 42h11l21-15v52L27 63H16z" />
    <path d="M55 50.500h9.500V41h6v9.500H80v6h-9.500V66h-6v-9.500H55z" />
  </g>,
  <g fill="#fff">
    <path d="M16 42h11l21-15v51L27 63H16z" />
    <path d="M55 48.500h25v6.500H55z" />
  </g>,
  <g stroke="#fff">
    <rect x="-23" y="-14.500" width="46" height="29" rx="3" strokeWidth="4" transform="translate(48 52) rotate(44)" />
    <path d="M-18 -13v26M18 -13v26" strokeWidth="3" transform="translate(48 52) rotate(44)" />
    <path d="M54 23q20 4 23 25M19 56q3 21 24 26" strokeWidth="3.500" />
  </g>,
  <g>
    <ScaleArrow t="translate(16 20)" />
    <ScaleArrow t="translate(80 20) scale(-1 1)" />
    <ScaleArrow t="translate(16 84) scale(1 -1)" />
    <ScaleArrow t="translate(80 84) scale(-1 -1)" />
    <text x="49" y="61" fontFamily={droid} fontSize="23" fill="#4a4a45" textAnchor="middle" textLength="40">
      1:1
    </text>
  </g>,
];

const Dots = ({ top }: { top?: number }) => (
  <Grip $top={top}>
    {Array.from({ length: 6 }, (_, i) => (
      <i key={i} />
    ))}
  </Grip>
);

const Tool = ({ children }: Kids) => <Svg w={96} h={104}>{children}</Svg>;

const Radio = ({ on }: { on?: boolean }) => (
  <Svg w={40} h={40}>
    <circle cx="20" cy="20" r="17.200" stroke={on ? "#ff4081" : "#757575"} strokeWidth="3.800" />
    {on && <circle cx="20" cy="20" r="10" fill="#ff4081" />}
  </Svg>
);

const EmulatorWindow = () => (
  <>
    <EmulatorShadow />
    <Emulator>
      <EmuTitle>
        <Light $fill="#fc5b57" $ring="#e2463f" />
        <Light $fill="#fdbc40" $ring="#e0a033" />
        <Light $fill="#34c84a" $ring="#24ad36" />
        <span>Genymotion for personal use - Google Nexus 6P - 6.0.0 -...</span>
      </EmuTitle>
      <EmuBody>
        <Screen>
          <StatusBar>
            <Svg w={112} h={46}>
              <path d="M0 14q17-9 34 0L17 37z" fill="#fff" />
              <path d="M64 10v26H38z" fill="#7c86c4" />
              <path d="M53 21v15H38z" fill="#fff" />
              <path d="M85 8h9v4h6v26H80V12h5z" fill="#7c86c4" />
              <path d="M80 15h20v21H80z" fill="#fff" />
            </Svg>
            2:53
          </StatusBar>
          <AppBar>
            <AppTitle>PADC_HelloWorld</AppTitle>
            <Svg w={8} h={34}>
              <circle cx="4" cy="5" r="4" fill="#fff" />
              <circle cx="4" cy="17" r="4" fill="#fff" />
              <circle cx="4" cy="29" r="4" fill="#fff" />
            </Svg>
          </AppBar>
          <ButtonRow>
            <RaisedButton>LOGIN</RaisedButton>
            <RaisedButton>REGISTER</RaisedButton>
          </ButtonRow>
          <FocusedField $h={110} $line="#ff4081" $weight={4} $pad={0}>user_name</FocusedField>
          <Field $h={112} $line="#b9b9b9" $weight={4} $pad={9} $track={-1}>pwd</Field>
          <Field $h={112} $line="#757575" $weight={2} $pad={10} $track={-0.2}>email</Field>
          <Field $h={114} $line="#757575" $weight={2} $pad={10}>Phone</Field>
          <Spinner>
            <span>Myanmar</span>
            <Svg w={18} h={10}>
              <path d="M0 0h18L9 10z" fill="#757575" />
            </Svg>
          </Spinner>
          <RadioRow><Radio on /><span>male</span></RadioRow>
          <RadioRow><Radio /><span>female</span></RadioRow>
          <BlueButton>REGISTER</BlueButton>
          <FabArea>
            <Fab>
              <Svg w={46} h={32}>
                <path d="M0 0h46v32H0z" fill="#f4f1f2" />
                <path d="M1 0l22 18L45 0M1 31l15-16M45 31L30 15" stroke="#f0508a" strokeWidth="2.200" />
              </Svg>
            </Fab>
          </FabArea>
          <NavBar>
            <Watermark>free for personal use</Watermark>
            <Svg w={32} h={38}>
              <path d="M30 3v32L3 19z" stroke="#e4e4e4" strokeWidth="3.500" />
            </Svg>
            <Svg w={36} h={36}>
              <circle cx="18" cy="18" r="16" stroke="#e8e8e8" strokeWidth="3.500" />
            </Svg>
            <Svg w={32} h={32}>
              <path d="M2 2h28v28H2z" stroke="#e0e0e0" strokeWidth="4" />
            </Svg>
          </NavBar>
        </Screen>
        <Strip>
          <Dots />
          {topTools.map((t, i) => <Tool key={i}>{t}</Tool>)}
          <Dots top={18} />
          {lowerTools.map((t, i) => <Tool key={i}>{t}</Tool>)}
          <Svg w={96} h={120}>
            <path d="M40 96h17l-8.500 8.500z" fill="#fff" />
          </Svg>
        </Strip>
      </EmuBody>
    </Emulator>
  </>
);

/* ---------- Dock icons: origin is the centre of each icon ---------- */

const Grad = ({ id, a, b, c }: { id: string; a: string; b: string; c?: string }) => (
  <linearGradient id={id} x1="0" y1="0" x2="0" y2="1">
    <stop offset="0" stopColor={a} />
    {c && <stop offset=".5" stopColor={c} />}
    <stop offset="1" stopColor={b} />
  </linearGradient>
);

const radial = (n: number, r0: number, r1: number, stroke: string, w: number) =>
  Array.from({ length: n }, (_, i) => (
    <path key={i} d={`M0 ${-r0}V${-(i % 2 ? r1 : r1 + 2)}`} stroke={stroke} strokeWidth={w} transform={`rotate(${(360 / n) * i})`} />
  ));

const Genymotion = ({ bg, fg }: { bg: string; fg: string }) => (
  <g>
    <circle r="40" fill={bg} />
    <circle cx="-19.500" cy="2" r="11.300" stroke={fg} strokeWidth="3.600" />
    <circle cx="15" cy="-1.500" r="14.300" stroke={fg} strokeWidth="4" />
  </g>
);

const dock: { run?: boolean; art: React.ReactNode }[] = [
  {
    run: true,
    art: (
      <g>
        <Grad id="fL" a="#2ed0fb" b="#2374ee" />
        <Grad id="fR" a="#f7f7f9" b="#dbe7f4" />
        <rect x="-32" y="-31" width="64" height="61" rx="3" fill="url(#fR)" />
        <path d="M1-31Q-5-14-5 4H5Q4 18 6 30H-29q-3 0-3-3V-28q0-3 3-3z" fill="url(#fL)" />
        <path d="M1-31Q-5-14-5 4H5Q4 18 6 30" stroke="#1c4c88" strokeWidth="1.200" />
        <path d="M-19 8Q0 26 19 8M-14-15v6M15-15v6" stroke="#111" strokeWidth="2.800" strokeLinecap="round" />
      </g>
    ),
  },
  {
    art: (
      <g>
        <Grad id="lp" a="#cfdfe4" b="#6f7072" />
        <circle r="34.500" fill="url(#lp)" stroke="#dce7ec" strokeWidth="2" />
        <path d="M21-21Q3-19-7-5q-9 0-17 9l11 1q0 3 3 6 4 3 6 3l3 11Q7 17 7 5 20-6 21-21z" fill="#3e4144" />
        <circle cx="8" cy="-7" r="4" fill="#a9b7be" />
        <path d="M-16 9q-6 3-5 12 8-1 11-7z" fill="#3e4144" />
      </g>
    ),
  },
  {
    art: (
      <g>
        <radialGradient id="sf">
          <stop offset="0" stopColor="#2cc3ea" />
          <stop offset="1" stopColor="#1c62e4" />
        </radialGradient>
        <circle r="34.500" fill="#f0f2f5" stroke="#cfd3d8" />
        <circle r="31" fill="url(#sf)" />
        {radial(60, 30, 25, "#e6f3ff", 1)}
        <path d="M21-21L-4-4 4 4z" fill="#e8302d" />
        <path d="M-21 21L-4-4 0 0z" fill="#fff" />
        <path d="M-21 21L4 4 0 0z" fill="#c8ccd0" />
      </g>
    ),
  },
  {
    run: true,
    art: (
      <g>
        <circle r="36.500" fill="#fecb4a" />
        <path d="M0 0L-30-21A36.500 36.500 0 0 0-2 36.500L13 9z" fill="#239c5a" />
        <path d="M-16 4L-30-20.500A36.500 36.500 0 0 1 32.500-17H0z" fill="#dc4a3f" />
        <circle r="17" fill="#f2f3f4" />
        <circle r="13.800" fill="#4b89f0" />
      </g>
    ),
  },
  {
    art: (
      <g>
        <path d="M-20 28L29 18l1 7-48 11z" fill="#d7cdbd" />
        <path d="M-31-27L18-36q4-1 5 3l7 54L-19 32l-1 4z" fill="#a13437" />
        <path d="M-29-27L18-36q4-1 5 3l7 54L-20 30z" fill="#b14244" />
        <path d="M-27-19L23-27" stroke="#8d2d30" />
        <g fill="#fff" fontFamily="Liberation Serif, serif" transform="rotate(-9)">
          <text x="1" y="-22" fontSize="10" textAnchor="middle" fill="#f3d6d6" textLength="33">Dictionary</text>
          <text x="-1" y="11" fontSize="29" textAnchor="middle" textLength="35">Aa</text>
        </g>
      </g>
    ),
  },
  {
    art: (
      <g>
        <path d="M-34-23L23-31l9 58-59 8z" fill="#5b6972" />
        <path d="M-31-25L22-34l8 53-53 11z" fill="#f7f7f7" stroke="#c9c9c9" />
        <path d="M-32-25L21-34l2 14-53 9z" fill="#e04a45" />
        <g textAnchor="middle" fontFamily={ui} transform="rotate(-8)">
          <text x="-1" y="-17" fontSize="13" fill="#fff" textLength="24">JUN</text>
          <text x="-2" y="18" fontSize="36" fontWeight="300" fill="#222" textLength="37">18</text>
        </g>
      </g>
    ),
  },
  {
    art: (
      <g>
        <path d="M-30-27L22-36l10 64-53 9z" fill="#fdfdfd" stroke="#c9b98a" />
        <path d="M-31-27L22-37l1 11-53 10z" fill="#fbc62f" />
        {Array.from({ length: 9 }, (_, i) => (
          <path key={i} d={`M${-28 + i * 0.8} ${-9 + i * 4.8}l52-8.500`} stroke="#d5d5d5" />
        ))}
      </g>
    ),
  },
  {
    art: (
      <g>
        <Grad id="ev" a="#a6e87e" b="#1f9e22" c="#52c83d" />
        <rect x="-34" y="-34" width="67" height="67" rx="3" fill="url(#ev)" />
        <path
          d="M-26-15h8q2 0 2-2v-9q12-1 16 4h10q5 1 6 6 2 8 1 22 0 14-3 19-4 2-10 1-7-1-7-9 0-5 8-5v5q-4 0-3 3 5 3 8-2 0-5-6-6-5-1-6-4-3 5-12 2-9-2-11-10-3-9-1-15z"
          fill="#3f4b42"
        />
        <path d="M-25-18l7-8v8z" fill="#3f4b42" />
        <path d="M3-3q3-4 6 1z" fill="#a6e87e" />
      </g>
    ),
  },
  {
    art: (
      <g>
        <Grad id="ib" a="#fda92b" b="#dc4a12" />
        <circle r="34" fill="url(#ib)" stroke="#f1f1f1" strokeWidth="2.400" />
        <path d="M-21-13q10-6 20 0V18q-10-7-20-1zM21-13q-10-6-20 0V18q10-7 20-1z" fill="#f5f3f1" />
      </g>
    ),
  },
  {
    art: (
      <g>
        <Grad id="as" a="#1fc7fb" b="#1c62ec" />
        <circle r="34" fill="url(#as)" stroke="#f1f1f1" strokeWidth="2.400" />
        <path d="M-24 1H24" stroke="#fff" strokeWidth="4" />
        <path d="M1-21L-17 11" stroke="#fff" strokeWidth="6" />
        <path d="M-20 9l5 3-8 7z" fill="#fff" />
        <path d="M-1-21L15 9" stroke="#eef4fb" strokeWidth="6" />
        <path d="M11 8q10-2 11 10-9-1-11-10z" fill="#eef4fb" />
        <circle cx="27" cy="-25" r="15.500" fill="#f5453f" />
        <text x="27" y="-18.500" fontFamily={ui} fontSize="18" fill="#fff" textAnchor="middle">8</text>
      </g>
    ),
  },
  {
    art: (
      <g>
        <Grad id="pr" a="#bfcfd7" b="#7b7c7e" />
        <rect x="-34.500" y="-33" width="69" height="66" rx="2" fill="url(#pr)" />
        <circle r="29" fill="#262626" />
        {gearTeeth(30, 21, 25, 2.6, "#bcbab7")}
        <circle r="20" stroke="#b9b6b3" strokeWidth="4" />
        <circle r="16" fill="#3a3a3a" />
        <path d="M0 0H18M0 0L-9-16M0 0L-9 16" stroke="#b4b1ae" strokeWidth="4.500" />
        <circle r="4" fill="#cfcdca" />
      </g>
    ),
  },
  {
    art: (
      <g>
        <circle r="35" fill="#666" stroke="#fff" strokeWidth="3.600" />
        <path
          d="M-24-2Q-22-21-5-22 4-22 9-17L7-8 14-5 18-14Q26-10 25 4 22 16 16 19L13 17Q18 10 16 3L12 3 11 20H4Q3 7 0 7T-3 20H-13L-15 5-19 11Q-24 6-24-2z"
          fill="#fff"
        />
      </g>
    ),
  },
  {
    art: (
      <g>
        <Grad id="su" a="#989898" b="#4d4d4d" c="#5a5a5a" />
        <path d="M-34-28h67l5 57q0 3-4 3h-68q-4 0-4-3z" fill="#eeeeee" stroke="#bbb" />
        <path d="M-33 14h66v7q0 3-3 3h-60q-3 0-3-3z" fill="#2c2c2c" />
        <path d="M-27-34h54q3 0 3 3l4 46q0 2-3 2h-62q-3 0-3-2l4-46q0-3 3-3z" fill="url(#su)" />
        <text x="-1" y="6" fontFamily={ui} fontSize="40" fontWeight="700" fill="#fb9b2f" textAnchor="middle">S</text>
      </g>
    ),
  },
  {
    art: (
      <g>
        <linearGradient id="ps" x1="0" y1="0" x2="1" y2="1">
          <stop offset="0" stopColor="#f42f97" />
          <stop offset=".4" stopColor="#b44af0" />
          <stop offset="1" stopColor="#6b57ff" />
        </linearGradient>
        <path d="M-25-38L1-32v5l8-7 18 6 9 22-6 7 6 15-29 20-24-10-1-8-18-1-6-43z" fill="url(#ps)" />
        <rect x="-23" y="-23" width="45" height="46" fill="#111" />
        <path d="M-18 15H-2" stroke="#fff" strokeWidth="3.500" />
        <text x="-1" y="1" fontFamily={ui} fontSize="26" fontWeight="700" fill="#fff" textAnchor="middle" textLength="34">PS</text>
      </g>
    ),
  },
  {
    art: (
      <g>
        <Grad id="vb" a="#3f9fdf" b="#0f5a9f" />
        <Grad id="vr" a="#fb5a55" b="#cc1f26" />
        <path
          fillRule="evenodd"
          d="M-13-16h45q4 0 4 4v44q0 4-4 4h-45q-4 0-4-4v-44q0-4 4-4zM-5-4v27h28V-4z"
          fill="url(#vr)"
        />
        <path
          fillRule="evenodd"
          d="M-33-36h45q4 0 4 4v44q0 4-4 4h-45q-4 0-4-4v-44q0-4 4-4zM-24-24V3H3v-27z"
          fill="url(#vb)"
        />
        <path d="M-7-16h25v12H4z" fill="#f7524e" />
        <path d="M-17-8L-5 3h-12z" fill="#f24a47" />
        <path d="M-5-14L16 9V18L7 16-17-8v-8z" fill="#a3a0a6" opacity=".55" />
      </g>
    ),
  },
  {
    run: true,
    art: (
      <g>
        <circle cy="-3" r="33.500" fill="#8fc455" />
        <path d="M-33.500-3a33.500 33.500 0 0 1 67 0z" fill="#7fb24c" />
        <path d="M-18 10Q6 30 22-3" stroke="#f3f3f3" strokeWidth="6.500" />
        <path d="M-5 0L-25 36" stroke="#f3f3f3" strokeWidth="6.500" />
        <path d="M5 0L25 36" stroke="#dedede" strokeWidth="6.500" />
        <path d="M-4-21h8v5l6 4v9L0 5-10-3v-9l6-4z" fill="#5c6064" />
        <circle cy="-7" r="4" fill="#8fc455" />
      </g>
    ),
  },
  { art: <Genymotion bg="#e62a61" fg="#fff" /> },
  {
    run: true,
    art: (
      <g>
        <rect x="-34" y="-30" width="68" height="60" rx="3" fill="#0c0c0c" stroke="#b9c2c6" strokeWidth="1.500" />
        <rect x="-30" y="-26" width="60" height="51" fill="#313233" />
        <path d="M-26-20l9 5-9 5M-15-9h9" stroke="#f3f3f3" strokeWidth="2.600" />
      </g>
    ),
  },
  { run: true, art: <Genymotion bg="#fff" fg="#e62a61" /> },
];

const DockIcon = ({ run, children }: { run?: boolean } & Kids) => (
  <Svg w={84} h={102} box="-42 -48 84 102">
    {children}
    {run && <circle cy="46" r="4.300" fill="#3d393c" />}
  </Svg>
);

const Dock = () => (
  <DockArea>
    <DockShelf>
      {dock.map((d, i) => (
        <DockIcon key={i} run={d.run}>{d.art}</DockIcon>
      ))}
      <DockRule />
      <DockIcon>
        <path d="M-25-31l5-7h39v20l6 8v46h-50z" fill="#fff" />
        <path d="M-22-34h18" stroke="#555" strokeWidth="1.500" />
        <path d="M5-37l20 22q-8-5-14 0 2-12-6-22z" fill="#e2e2e2" stroke="#bbb" />
        <path d="M0-31V7" stroke="#3b4145" strokeWidth="8" />
        <path d="M0-30V6" stroke="#c4ced3" strokeWidth="3.500" strokeDasharray="2 2" />
        <path d="M-3-23h6v12h-6z" fill="#9fb4be" />
        <text x="0" y="32" fontFamily={ui} fontSize="11" fill="#777" textAnchor="middle">ZIP</text>
      </DockIcon>
      <DockIcon>
        <Grad id="tr" a="#dedede" b="#f4f4f4" c="#d5d3d3" />
        <path d="M-26-27l10-9 8 4 6-5 7 5 9-5 11 11-6 10h-38z" fill="#f4f4f4" stroke="#8a8a8a" />
        <path d="M-22-26l5-7 4 5 4-4 3 6-4 4zM2-22l3-9 5 3 4-5 4 7 4-2-4 6z" fill="#4a4a4c" />
        <path d="M-4-28h7v4h-7z" fill="#45b2d8" />
        <path d="M9-25h5v5H9z" fill="#b5532e" />
        <path d="M-29-30l7 58q1 7 12 8h20q11-1 12-8l7-58q-4 13-29 13t-29-13z" fill="url(#tr)" />
        <ellipse cy="-29" rx="29" ry="8" stroke="#d4d4d4" strokeWidth="1.500" />
      </DockIcon>
    </DockShelf>
  </DockArea>
);

/* ---------- Menu bar ---------- */

const Flag = () => (
  <Svg w={32} h={22}>
    <rect width="32" height="22" fill="#fff" />
    {[0, 1, 2, 3, 4, 5, 6].map((i) => (
      <rect key={i} y={i * 3.4} width="32" height="1.800" fill="#a91c24" />
    ))}
    <rect width="15" height="13" fill="#3b3f7c" />
    <path d="M2 3h12M2 6h12M2 9h12" stroke="#c9cbe2" strokeWidth="1.200" strokeDasharray="1.200 1.600" />
  </Svg>
);

const TopBar = () => (
  <MenuBar>
    <MenuLeft>
      <Svg w={30} h={32} box="0 0 30 32">
        <path
          d="M21 0q.5 4-2 6.500T14.500 9q-.5-3.500 2-6T21 0zM15.500 10q1.500 0 3-.8T22 8.500q3.700 0 5.500 3-3.500 2.200-3.300 6 .2 4.200 4 6-.9 2.600-2.600 5-1.800 2.500-3.800 2.500-1.400 0-2.600-.7t-2.900-.7-2.900.7-2.500.7q-2 0-4-2.800Q3.500 23.500 3.500 18.500q0-4.400 2.300-7T11.500 9q1.500 0 2.500.5t1.500.5z"
          fill="#333"
        />
      </Svg>
      <AppName>player</AppName>
    </MenuLeft>
    <MenuRight>
      <Extra $w={28} $after={32}>
        <Svg w={28} h={28}>
          <path d="M17 8V2H2v17h7" stroke="#2e2e2e" strokeWidth="3.800" />
          <path d="M19 10h7v16H11v-7" stroke="#2e2e2e" strokeWidth="3.800" />
          <path d="M8 8l12 12" stroke="#2e2e2e" strokeWidth="3" />
          <path d="M21 13v9h-9z" fill="#2e2e2e" />
        </Svg>
      </Extra>
      <Extra $w={26} $after={28}>
        <Svg w={26} h={32}>
          <path d="M5 9l15 14-7.500 7V2L20 9 5 23" stroke="#b9b9b9" strokeWidth="2" />
        </Svg>
      </Extra>
      <Extra $w={37} $after={21}>
        <Svg w={37} h={34}>
          <path d="M5.500 17A15 15 0 1 1 9.500 28" stroke="#b5b5b5" strokeWidth="2.400" />
          <path d="M0 15h11l-5.500 8z" fill="#b5b5b5" />
          <path d="M20.500 9v9l4.500 7" stroke="#b5b5b5" strokeWidth="2.200" />
        </Svg>
      </Extra>
      <Extra $w={41} $after={25}>
        <Svg w={41} h={30}>
          <g stroke="#2e2e2e" strokeWidth="3">
            <path d="M1.500 10.500q19-18 38 0" />
            <path d="M7.500 16.500q13-12 26 0" />
            <path d="M13 22q7.500-7 15 0" />
          </g>
          <path d="M16.500 25.500q4-3 8 0l-4 4z" fill="#2e2e2e" />
        </Svg>
      </Extra>
      <Extra $w={32} $after={11}><Flag /></Extra>
      <Extra $w={41} $after={29}><MenuText $size={24} $track={-0.8}>U.S.</MenuText></Extra>
      <Extra $w={48} $after={10}><MenuText $size={24} $track={-1}>88%</MenuText></Extra>
      <Extra $w={46} $after={28}>
        <Svg w={46} h={24}>
          <rect x="1" y="1" width="37" height="22" rx="3" stroke="#2e2e2e" strokeWidth="2" />
          <rect x="4" y="4" width="28" height="16" fill="#2e2e2e" />
          <path d="M41 8q4 1 4 4t-4 4z" fill="#2e2e2e" />
        </Svg>
      </Extra>
      <Extra $w={253} $after={37}>
        <MenuText $size={28} $track={-0.45}>Sat Jun 18</MenuText>
        <MenuText $size={28} $track={-0.5}>1:23 PM</MenuText>
      </Extra>
      <Extra $w={28} $after={32}><Magnifier s={28} c="#2e2e2e" t={2.6} /></Extra>
      <Extra $w={36}>
        <Svg w={36} h={20}>
          <path d="M0 2h4M0 10h4M0 18h4M8 2h28M8 10h22M8 18h28" stroke="#2e2e2e" strokeWidth="4" />
        </Svg>
      </Extra>
    </MenuRight>
  </MenuBar>
);

export default function App() {
  return (
    <>
      <GlobalStyle />
      <Desktop>
        <TopBar />
        <Finder />
        <EmulatorWindow />
        <Dock />
      </Desktop>
    </>
  );
}
